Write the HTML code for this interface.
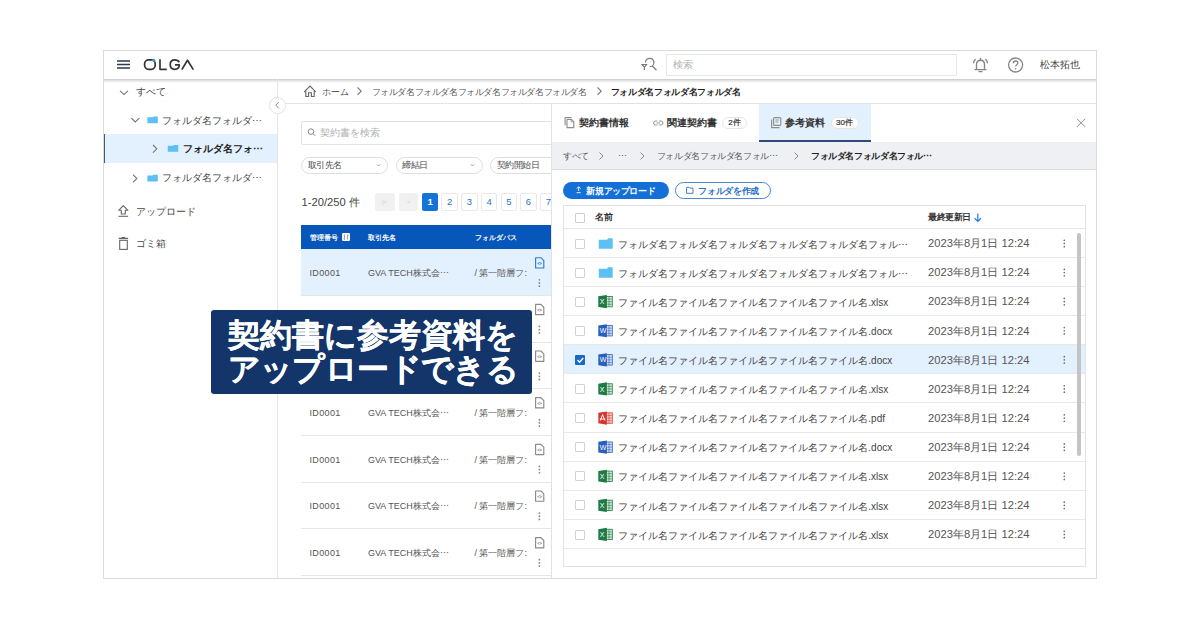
<!DOCTYPE html>
<html><head><meta charset="utf-8">
<style>
*{box-sizing:border-box;margin:0;padding:0}
html,body{width:1200px;height:630px;overflow:hidden;background:#fff}
body{position:relative;font-family:"Liberation Sans",sans-serif;color:#444}
.a{position:absolute}
.t{position:absolute;white-space:nowrap;line-height:1}
svg{position:absolute;overflow:visible}
</style></head><body>

<!-- frame -->
<div class="a" style="left:103px;top:50px;width:994px;height:529px;border:1px solid #dadada"></div>

<!-- header -->
<div class="a" style="left:104px;top:79px;width:992px;height:4px;background:linear-gradient(#c9c9c9,#e4e4e4 40%,rgba(255,255,255,0))"></div>
<svg style="left:0;top:0" width="200" height="100"><path d="M117 61H130M117 64.5H130M117 68H130" stroke="#2b3a4e" stroke-width="1.5"/></svg>
<svg style="left:0;top:0" width="1200" height="100">
  <g fill="none" stroke="#363636" stroke-width="1.7" stroke-linejoin="round">
    <rect x="144.6" y="59.9" width="10.6" height="9.4" rx="4"/>
    <path d="M160 59.3V69.3H166.8"/>
    <path d="M179.3 62.2C178.3 60.5 176.8 59.9 174.7 59.9C171.8 59.9 170.2 62 170.2 64.6C170.2 67.3 171.8 69.3 174.7 69.3C177.5 69.3 179.3 67.6 179.3 64.8H175"/>
    <path d="M181.8 69.6L187.5 60.2L193.3 69.6"/>
  </g>
  <circle cx="153.8" cy="60.3" r="1.5" fill="#2aa3e6"/>
  <!-- search filter icon -->
  <g fill="none" stroke="#7a7a7a" stroke-width="1.2">
    <path d="M645.5 62.5A4.2 4.2 0 1 1 649.8 66.7"/>
    <path d="M652.2 66L656.5 70.2"/>
    <path d="M642.2 64.5H646.5L644.35 67.3ZM644.35 67.3V70"/>
  </g>
  <!-- bell -->
  <g fill="none" stroke="#858585" stroke-width="1.35" stroke-linecap="round">
    <path d="M976.5 69.5V64.5C976.5 61.8 978.2 60.2 980.5 60.2C982.8 60.2 984.5 61.8 984.5 64.5V69.5M975 69.6H986M979 71.6H982"/>
    <path d="M975.2 59.4C974.2 60.3 973.7 61.5 973.6 62.8M985.8 59.4C986.8 60.3 987.3 61.5 987.4 62.8"/>
    <path d="M980.5 58.5V60"/>
  </g>
  <!-- help -->
  <g fill="none" stroke="#858585" stroke-width="1.3">
    <circle cx="1015.6" cy="65" r="7"/>
    <path d="M1013.3 63.2C1013.3 61.8 1014.3 61 1015.6 61C1016.9 61 1017.9 61.8 1017.9 63C1017.9 64.6 1015.6 64.8 1015.6 66.6"/>
  </g>
  <circle cx="1015.6" cy="68.8" r="0.8" fill="#858585"/>
</svg>
<div class="a" style="left:666px;top:53.5px;width:291px;height:22.5px;border:1px solid #e6e6e6;border-radius:1px"></div>
<div class="t" style="left:672.5px;top:60px;font-size:9.6px;color:#b0b0b0">検索</div>
<div class="t" style="left:1039.5px;top:59.5px;font-size:9.8px;color:#444">松本拓也</div>

<!-- sidebar -->
<div class="a" style="left:277px;top:79px;width:1px;height:499px;background:#e4e4e4"></div>
<div class="a" style="left:104px;top:134.3px;width:173px;height:28.7px;background:#e3f0fd"></div>
<div class="a" style="left:104px;top:134.3px;width:1.3px;height:28.7px;background:#4a5870"></div>
<svg style="left:0;top:0" width="300" height="300">
  <g fill="none" stroke="#777" stroke-width="1.1">
    <path d="M120 90.8L124 94.6L128 90.8"/>
    <path d="M131.3 118.2L135.3 122L139.3 118.2"/>
    <path d="M153 145L156.8 148.8L153 152.6"/>
    <path d="M133 174.7L136.8 178.5L133 182.3"/>
  </g>
  <g fill="#5cc0f4"><path d="M147.4 117.3H152.70000000000002L153.20000000000002 116.5H157.8V123.3H147.4z"/><path d="M167.8 145.8H173.10000000000002L173.60000000000002 145H178.20000000000002V151.8H167.8z"/><path d="M147.4 175.60000000000002H152.70000000000002L153.20000000000002 174.8H157.8V181.60000000000002H147.4z"/></g>
  <g fill="none" stroke="#666" stroke-width="1.1">
    <path d="M123.3 205.6L127.9 210.3H125.3V214H121.3V210.3H118.7Z" stroke-linejoin="round"/><path d="M118.5 216.3H128.1"/>
    <path d="M118.6 238.4H128.1M121.6 237.6H125.1"/><rect x="119.7" y="240.3" width="7.6" height="9.1"/>
  </g>
</svg>
<div class="t" style="left:136px;top:87px;font-size:10px;color:#474747">すべて</div>
<div class="t" style="left:162px;top:116px;font-size:10px;color:#474747">フォルダ名フォルダ⋯</div>
<div class="t" style="left:182.5px;top:144px;font-size:10px;color:#222;font-weight:bold">フォルダ名フォ⋯</div>
<div class="t" style="left:162px;top:173px;font-size:10px;color:#474747">フォルダ名フォルダ⋯</div>
<div class="t" style="left:135.5px;top:206.5px;font-size:10px;color:#474747">アップロード</div>
<div class="t" style="left:135.5px;top:238.5px;font-size:10px;color:#474747">ゴミ箱</div>

<!-- main breadcrumb -->
<div class="a" style="left:285px;top:103px;width:266px;height:1px;background:#e4e4e4"></div>
<div class="a" style="left:269px;top:96.8px;width:17px;height:17px;border-radius:50%;background:#fff;border:1px solid #e2e2e2"></div>
<svg style="left:0;top:0" width="800" height="300">
  <path d="M278.8 102L275.8 105.2L278.8 108.4" fill="none" stroke="#888" stroke-width="1"/>
  <path d="M304.2 91.8L310 86L315.8 91.8M305.8 90.3V96.5H308.6V92.8H311.4V96.5H314.2V90.3" fill="none" stroke="#666" stroke-width="1.1"/>
  <path d="M357.5 87.5L361.2 91.2L357.5 94.9" fill="none" stroke="#777" stroke-width="1.1"/>
  <path d="M597.5 87.5L601.2 91.2L597.5 94.9" fill="none" stroke="#777" stroke-width="1.1"/>
</svg>
<div class="t" style="left:322px;top:88px;font-size:8.6px;color:#555">ホーム</div>
<div class="t" style="left:371.5px;top:87.6px;font-size:9px;letter-spacing:-0.4px;color:#555">フォルダ名フォルダ名フォルダ名フォルダ名フォルダ名</div>
<div class="t" style="left:610.5px;top:87.6px;font-size:9px;letter-spacing:-0.33px;color:#222;font-weight:bold">フォルダ名フォルダ名フォルダ名</div>

<!-- main search -->
<div class="a" style="left:300.5px;top:120.5px;width:300px;height:24.5px;border:1px solid #e3e3e3;border-radius:2px"></div>
<svg style="left:0;top:0" width="400" height="200">
  <circle cx="311" cy="131.6" r="2.8" fill="none" stroke="#888" stroke-width="1"/>
  <path d="M313 133.6L315.2 135.8" stroke="#888" stroke-width="1"/>
</svg>
<div class="t" style="left:320px;top:127.6px;font-size:9.8px;color:#b0b0b0">契約書を検索</div>

<!-- filter chips -->
<div class="a" style="left:301px;top:156.5px;width:87px;height:17.5px;border:1px solid #dedede;border-radius:9px"></div>
<div class="a" style="left:395.8px;top:156.5px;width:87px;height:17.5px;border:1px solid #dedede;border-radius:9px"></div>
<div class="a" style="left:490.4px;top:156.5px;width:87px;height:17.5px;border:1px solid #dedede;border-radius:9px"></div>
<div class="t" style="left:307.5px;top:160.8px;font-size:9px;letter-spacing:-0.5px;color:#4a4a4a">取引先名</div>
<div class="t" style="left:402px;top:160.8px;font-size:9px;letter-spacing:-0.5px;color:#4a4a4a">締結日</div>
<div class="t" style="left:496.5px;top:160.8px;font-size:9px;letter-spacing:-0.5px;color:#4a4a4a">契約開始日</div>
<svg style="left:0;top:0" width="600" height="200">
  <path d="M376.8 164.3L378.5 166L380.2 164.3M470.8 164.3L472.5 166L474.2 164.3" fill="none" stroke="#999" stroke-width="0.9"/>
</svg>

<!-- pagination -->
<div class="t" style="left:301.5px;top:196.5px;font-size:11.2px;color:#444">1-20/250 件</div>
<div class="a" style="left:375px;top:193.2px;width:19.7px;height:17.5px;background:#f1f1f1;border-radius:2px"></div>
<div class="a" style="left:399.2px;top:193.2px;width:19.2px;height:17.5px;background:#f1f1f1;border-radius:2px"></div>
<div class="t" style="left:382px;top:198.5px;font-size:6px;color:#ccc">|&lt;</div>
<div class="t" style="left:407px;top:198.5px;font-size:6px;color:#ccc">&lt;</div>
<div class="a" style="left:422.2px;top:193.2px;width:16px;height:17.5px;background:#1473d6;border-radius:2px"></div>
<div class="t" style="left:427.6px;top:197.3px;font-size:9.5px;color:#fff;font-weight:bold">1</div>
<div class="a" style="left:441.3px;top:193.2px;width:16.5px;height:17.5px;border:1px solid #e9e9e9;border-radius:2px"></div>
<div class="a" style="left:461px;top:193.2px;width:16.5px;height:17.5px;border:1px solid #e9e9e9;border-radius:2px"></div>
<div class="a" style="left:480.8px;top:193.2px;width:16.5px;height:17.5px;border:1px solid #e9e9e9;border-radius:2px"></div>
<div class="a" style="left:500.6px;top:193.2px;width:16.5px;height:17.5px;border:1px solid #e9e9e9;border-radius:2px"></div>
<div class="a" style="left:520px;top:193.2px;width:16.5px;height:17.5px;border:1px solid #e9e9e9;border-radius:2px"></div>
<div class="a" style="left:540px;top:193.2px;width:16.5px;height:17.5px;border:1px solid #e9e9e9;border-radius:2px"></div>
<div class="t" style="left:447px;top:197.3px;font-size:9.5px;color:#2a73cc">2</div>
<div class="t" style="left:466.8px;top:197.3px;font-size:9.5px;color:#2a73cc">3</div>
<div class="t" style="left:486.5px;top:197.3px;font-size:9.5px;color:#2a73cc">4</div>
<div class="t" style="left:506.3px;top:197.3px;font-size:9.5px;color:#2a73cc">5</div>
<div class="t" style="left:525.8px;top:197.3px;font-size:9.5px;color:#2a73cc">6</div>
<div class="t" style="left:545.7px;top:197.3px;font-size:9.5px;color:#2a73cc">7</div>

<!-- left table -->
<div class="a" style="left:301px;top:224.8px;width:260px;height:24px;background:#0756b9"></div>
<div class="t" style="left:309.7px;top:233.7px;font-size:7.2px;color:#fff;font-weight:bold">管理番号</div>
<div class="a" style="left:341.8px;top:232.9px;width:8.4px;height:8.4px;background:#fff;border-radius:1.2px"></div><svg style="left:0;top:0" width="400" height="300"><path d="M344.5 234.6V239.6M343.4 238.4L344.5 239.6M347.5 234.6V239.6M348.6 235.8L347.5 234.6" fill="none" stroke="#8a8a8a" stroke-width="0.75"/></svg>
<div class="t" style="left:368.2px;top:233.7px;font-size:7.2px;color:#fff;font-weight:bold">取引先名</div>
<div class="t" style="left:474.8px;top:233.7px;font-size:7.2px;color:#fff;font-weight:bold">フォルダパス</div>
<div class="a" style="left:301px;top:248.8px;width:260px;height:46.4px;background:#e3f0fd"></div>

<div class="a" style="left:301px;top:294.95px;width:260px;height:1px;background:#e6e6e6"></div>
<div class="t" style="left:309.5px;top:269.23px;font-size:9px;letter-spacing:0.35px;color:#555">ID0001</div>
<div class="t" style="left:368px;top:269.23px;font-size:9px;color:#555">GVA TECH株式会⋯</div>
<div class="t" style="left:474.4px;top:269.23px;font-size:9px;color:#555">/ 第一階層フ:</div>
<svg style="left:0;top:0" width="600" height="630"><path d="M535.6 257.70h5.3l2.9 2.9v7.4h-8.2z" fill="none" stroke="#2f7bd0" stroke-width="1.15" stroke-linejoin="round"/><path d="M537.6 263.40q2.1 -2 4.2 0q-2.1 2 -4.2 0z" fill="none" stroke="#2f7bd0" stroke-width="0.7"/></svg>
<svg style="left:0;top:0" width="600" height="630"><g fill="#858585"><circle cx="539.4" cy="279.80" r="0.9"/><circle cx="539.4" cy="283.00" r="0.9"/><circle cx="539.4" cy="286.20" r="0.9"/></g></svg>
<div class="a" style="left:301px;top:341.60px;width:260px;height:1px;background:#e6e6e6"></div>
<div class="t" style="left:309.5px;top:315.88px;font-size:9px;letter-spacing:0.35px;color:#555">ID0001</div>
<div class="t" style="left:368px;top:315.88px;font-size:9px;color:#555">GVA TECH株式会⋯</div>
<div class="t" style="left:474.4px;top:315.88px;font-size:9px;color:#555">/ 第一階層フ:</div>
<svg style="left:0;top:0" width="600" height="630"><path d="M535.6 304.35h5.3l2.9 2.9v7.4h-8.2z" fill="none" stroke="#8a8a8a" stroke-width="1.15" stroke-linejoin="round"/><path d="M537.6 310.05q2.1 -2 4.2 0q-2.1 2 -4.2 0z" fill="none" stroke="#8a8a8a" stroke-width="0.7"/></svg>
<svg style="left:0;top:0" width="600" height="630"><g fill="#858585"><circle cx="539.4" cy="326.45" r="0.9"/><circle cx="539.4" cy="329.65" r="0.9"/><circle cx="539.4" cy="332.85" r="0.9"/></g></svg>
<div class="a" style="left:301px;top:388.25px;width:260px;height:1px;background:#e6e6e6"></div>
<div class="t" style="left:309.5px;top:362.53px;font-size:9px;letter-spacing:0.35px;color:#555">ID0001</div>
<div class="t" style="left:368px;top:362.53px;font-size:9px;color:#555">GVA TECH株式会⋯</div>
<div class="t" style="left:474.4px;top:362.53px;font-size:9px;color:#555">/ 第一階層フ:</div>
<svg style="left:0;top:0" width="600" height="630"><path d="M535.6 351.00h5.3l2.9 2.9v7.4h-8.2z" fill="none" stroke="#8a8a8a" stroke-width="1.15" stroke-linejoin="round"/><path d="M537.6 356.70q2.1 -2 4.2 0q-2.1 2 -4.2 0z" fill="none" stroke="#8a8a8a" stroke-width="0.7"/></svg>
<svg style="left:0;top:0" width="600" height="630"><g fill="#858585"><circle cx="539.4" cy="373.10" r="0.9"/><circle cx="539.4" cy="376.30" r="0.9"/><circle cx="539.4" cy="379.50" r="0.9"/></g></svg>
<div class="a" style="left:301px;top:434.90px;width:260px;height:1px;background:#e6e6e6"></div>
<div class="t" style="left:309.5px;top:409.18px;font-size:9px;letter-spacing:0.35px;color:#555">ID0001</div>
<div class="t" style="left:368px;top:409.18px;font-size:9px;color:#555">GVA TECH株式会⋯</div>
<div class="t" style="left:474.4px;top:409.18px;font-size:9px;color:#555">/ 第一階層フ:</div>
<svg style="left:0;top:0" width="600" height="630"><path d="M535.6 397.65h5.3l2.9 2.9v7.4h-8.2z" fill="none" stroke="#8a8a8a" stroke-width="1.15" stroke-linejoin="round"/><path d="M537.6 403.35q2.1 -2 4.2 0q-2.1 2 -4.2 0z" fill="none" stroke="#8a8a8a" stroke-width="0.7"/></svg>
<svg style="left:0;top:0" width="600" height="630"><g fill="#858585"><circle cx="539.4" cy="419.75" r="0.9"/><circle cx="539.4" cy="422.95" r="0.9"/><circle cx="539.4" cy="426.15" r="0.9"/></g></svg>
<div class="a" style="left:301px;top:481.55px;width:260px;height:1px;background:#e6e6e6"></div>
<div class="t" style="left:309.5px;top:455.82px;font-size:9px;letter-spacing:0.35px;color:#555">ID0001</div>
<div class="t" style="left:368px;top:455.82px;font-size:9px;color:#555">GVA TECH株式会⋯</div>
<div class="t" style="left:474.4px;top:455.82px;font-size:9px;color:#555">/ 第一階層フ:</div>
<svg style="left:0;top:0" width="600" height="630"><path d="M535.6 444.30h5.3l2.9 2.9v7.4h-8.2z" fill="none" stroke="#8a8a8a" stroke-width="1.15" stroke-linejoin="round"/><path d="M537.6 450.00q2.1 -2 4.2 0q-2.1 2 -4.2 0z" fill="none" stroke="#8a8a8a" stroke-width="0.7"/></svg>
<svg style="left:0;top:0" width="600" height="630"><g fill="#858585"><circle cx="539.4" cy="466.40" r="0.9"/><circle cx="539.4" cy="469.60" r="0.9"/><circle cx="539.4" cy="472.80" r="0.9"/></g></svg>
<div class="a" style="left:301px;top:528.20px;width:260px;height:1px;background:#e6e6e6"></div>
<div class="t" style="left:309.5px;top:502.48px;font-size:9px;letter-spacing:0.35px;color:#555">ID0001</div>
<div class="t" style="left:368px;top:502.48px;font-size:9px;color:#555">GVA TECH株式会⋯</div>
<div class="t" style="left:474.4px;top:502.48px;font-size:9px;color:#555">/ 第一階層フ:</div>
<svg style="left:0;top:0" width="600" height="630"><path d="M535.6 490.95h5.3l2.9 2.9v7.4h-8.2z" fill="none" stroke="#8a8a8a" stroke-width="1.15" stroke-linejoin="round"/><path d="M537.6 496.65q2.1 -2 4.2 0q-2.1 2 -4.2 0z" fill="none" stroke="#8a8a8a" stroke-width="0.7"/></svg>
<svg style="left:0;top:0" width="600" height="630"><g fill="#858585"><circle cx="539.4" cy="513.05" r="0.9"/><circle cx="539.4" cy="516.25" r="0.9"/><circle cx="539.4" cy="519.45" r="0.9"/></g></svg>
<div class="a" style="left:301px;top:574.85px;width:260px;height:1px;background:#e6e6e6"></div>
<div class="t" style="left:309.5px;top:549.13px;font-size:9px;letter-spacing:0.35px;color:#555">ID0001</div>
<div class="t" style="left:368px;top:549.13px;font-size:9px;color:#555">GVA TECH株式会⋯</div>
<div class="t" style="left:474.4px;top:549.13px;font-size:9px;color:#555">/ 第一階層フ:</div>
<svg style="left:0;top:0" width="600" height="630"><path d="M535.6 537.60h5.3l2.9 2.9v7.4h-8.2z" fill="none" stroke="#8a8a8a" stroke-width="1.15" stroke-linejoin="round"/><path d="M537.6 543.30q2.1 -2 4.2 0q-2.1 2 -4.2 0z" fill="none" stroke="#8a8a8a" stroke-width="0.7"/></svg>
<svg style="left:0;top:0" width="600" height="630"><g fill="#858585"><circle cx="539.4" cy="559.70" r="0.9"/><circle cx="539.4" cy="562.90" r="0.9"/><circle cx="539.4" cy="566.10" r="0.9"/></g></svg>
<!-- right panel -->
<div class="a" style="left:550px;top:103px;width:4px;height:475px;background:linear-gradient(90deg,rgba(0,0,0,0),rgba(0,0,0,0.03))"></div>
<div class="a" style="left:551px;top:103px;width:545px;height:475px;background:#fff;border-top:1px solid #e2e2e2;border-left:1px solid #e2e2e2"></div>
<div class="a" style="left:758.7px;top:104px;width:112.6px;height:37.5px;background:#e3f0fd"></div>
<div class="a" style="left:758.7px;top:139.6px;width:112.6px;height:2px;background:#2c4a7c"></div>
<div class="a" style="left:552px;top:141.6px;width:544px;height:28px;background:#eef0f4;border-bottom:1px solid #dcdde0"></div>
<svg style="left:0;top:0" width="1200" height="300">
  <g fill="none" stroke="#8f8f8f" stroke-width="1.15" stroke-linejoin="round">
    <path d="M565.1 125.3V117.5H571.6"/>
    <path d="M567 119.4H571.4L573.8 121.8V127.6H567Z"/>
    <path d="M571.2 119.6V122H573.6" stroke-width="0.8"/>
    <path d="M657.4 121h-1.8a2 2 0 0 0 0 4h1.8M659.2 121h1.8a2 2 0 0 1 0 4h-1.8M656.6 123h3.4" stroke-width="0.95"/>
    <path d="M771.6 119.6V127.6H779.6"/>
    <rect x="773.6" y="117.6" width="7.2" height="7.8" rx="1"/>
    <path d="M775.4 120H779M775.4 122H778.2" stroke-width="0.9"/>
  </g>
  <path d="M1077 118.8l8 8M1085 118.8l-8 8" stroke="#8a8a8a" stroke-width="1"/>
  <g fill="none" stroke="#888" stroke-width="1">
    <path d="M599.5 152.5L603 156L599.5 159.5M640.5 152.5L644 156L640.5 159.5M794.5 152.5L798 156L794.5 159.5"/>
  </g>
</svg>
<div class="t" style="left:578.7px;top:118px;font-size:10px;color:#333;font-weight:bold">契約書情報</div>
<div class="t" style="left:667px;top:118px;font-size:10px;color:#333;font-weight:bold">関連契約書</div>
<div class="a" style="left:722px;top:116.7px;width:24.7px;height:12px;border:1px solid #e6e6e6;border-radius:6px;background:#fff"></div>
<div class="t" style="left:728.3px;top:118.6px;font-size:8px;color:#333;-webkit-text-stroke:0.2px #333">2件</div>
<div class="t" style="left:785px;top:118px;font-size:10px;color:#333;font-weight:bold">参考資料</div>
<div class="a" style="left:830.7px;top:116.7px;width:28px;height:12px;border:1px solid #e6e6e6;border-radius:6px;background:#fff"></div>
<div class="t" style="left:836px;top:118.6px;font-size:8px;color:#333;-webkit-text-stroke:0.2px #333">30件</div>

<div class="t" style="left:563.3px;top:152.2px;font-size:9px;letter-spacing:-0.5px;color:#555">すべて</div>
<div class="t" style="left:617.5px;top:152.2px;font-size:8.5px;color:#555">⋯</div>
<div class="t" style="left:656.7px;top:152.2px;font-size:9px;letter-spacing:-0.36px;color:#555">フォルダ名フォルダ名フォル⋯</div>
<div class="t" style="left:811px;top:152.2px;font-size:9px;letter-spacing:-0.38px;color:#222;font-weight:bold">フォルダ名フォルダ名フォル⋯</div>

<div class="a" style="left:562.6px;top:182px;width:106.4px;height:17px;background:#1470d6;border-radius:9px"></div>
<div class="t" style="left:586.4px;top:186.6px;font-size:9px;letter-spacing:-0.4px;color:#fff;font-weight:bold">新規アップロード</div>
<svg style="left:0;top:0" width="1200" height="300">
  <path d="M576.8 188.6L578.7 186.7L580.6 188.6M578.7 187V191M576.6 192.7H580.8" fill="none" stroke="#fff" stroke-width="0.9"/>
  <path d="M686.6 187.3h2.4l0.8 0.8h3.2v5.2h-6.4z" fill="none" stroke="#2a6fc9" stroke-width="0.9"/>
</svg>
<div class="a" style="left:674.5px;top:182px;width:96.3px;height:17px;border:1px solid #4d88d2;border-radius:9px"></div>
<div class="t" style="left:698.4px;top:186.6px;font-size:9px;letter-spacing:-0.35px;color:#2a6fc9;font-weight:bold">フォルダを作成</div>

<!-- file table -->
<div class="a" style="left:563px;top:205px;width:522.5px;height:362px;border:1px solid #e2e2e2"></div>
<div class="a" style="left:564px;top:227.8px;width:521px;height:1px;background:#e6e6e6"></div>
<div class="a" style="left:575.3px;top:212.8px;width:10px;height:10px;border:1px solid #cfcfcf;border-radius:1px"></div>
<div class="t" style="left:594.7px;top:212.5px;font-size:9px;color:#333;font-weight:bold">名前</div>
<div class="t" style="left:928px;top:213.3px;font-size:9px;letter-spacing:-0.4px;color:#333;font-weight:bold">最終更新日</div>
<svg style="left:0;top:0" width="1200" height="300">
  <path d="M977.8 213.5V221.2M974.6 218.2L977.8 221.4L981 218.2" fill="none" stroke="#2a7be0" stroke-width="1.25"/>
</svg>

<div class="a" style="left:564px;top:256.90px;width:521px;height:1px;background:#e8e8e8"></div>
<div class="a" style="left:575.3px;top:238.55px;width:10px;height:10px;border:1px solid #d2d2d2;border-radius:1px"></div>
<svg style="left:0;top:0" width="700" height="630"><path d="M598.8 239.75H607.2L608 238.15H612.7V248.75H598.8z" fill="#5cc0f4"/></svg>
<div class="t" style="left:618.3px;top:239.65px;font-size:10px;color:#444">フォルダ名フォルダ名フォルダ名フォルダ名フォルダ名フォル⋯</div>
<div class="t" style="left:928px;top:238.25px;font-size:11.2px;color:#555">2023年8月1日 12:24</div>
<svg style="left:0;top:0" width="1200" height="630"><g fill="#707070"><circle cx="1064.3" cy="240.25" r="0.85"/><circle cx="1064.3" cy="243.45" r="0.85"/><circle cx="1064.3" cy="246.65" r="0.85"/></g></svg>
<div class="a" style="left:564px;top:286.00px;width:521px;height:1px;background:#e8e8e8"></div>
<div class="a" style="left:575.3px;top:267.65px;width:10px;height:10px;border:1px solid #d2d2d2;border-radius:1px"></div>
<svg style="left:0;top:0" width="700" height="630"><path d="M598.8 268.85H607.2L608 267.25H612.7V277.85H598.8z" fill="#5cc0f4"/></svg>
<div class="t" style="left:618.3px;top:268.75px;font-size:10px;color:#444">フォルダ名フォルダ名フォルダ名フォルダ名フォルダ名フォル⋯</div>
<div class="t" style="left:928px;top:267.35px;font-size:11.2px;color:#555">2023年8月1日 12:24</div>
<svg style="left:0;top:0" width="1200" height="630"><g fill="#707070"><circle cx="1064.3" cy="269.35" r="0.85"/><circle cx="1064.3" cy="272.55" r="0.85"/><circle cx="1064.3" cy="275.75" r="0.85"/></g></svg>
<div class="a" style="left:564px;top:315.10px;width:521px;height:1px;background:#e8e8e8"></div>
<div class="a" style="left:575.3px;top:296.75px;width:10px;height:10px;border:1px solid #d2d2d2;border-radius:1px"></div>
<svg style="left:0;top:0" width="700" height="630"><rect x="605.80" y="296.45" width="6.5" height="10.4" fill="#cfe8d6" stroke="#1f7a43" stroke-width="0.8"/><path d="M607.30 299.05h4.5M607.30 301.65h4.5M607.30 304.25h4.5M609.00 296.65v10" stroke="#1f7a43" stroke-width="0.6"/><path d="M598.30 296.35L606.90 295.05V308.25L598.30 306.95z" fill="#1f7a43"/></svg>
<div class="t" style="left:599.70px;top:298.25px;font-size:7px;color:#fff">X</div>
<div class="t" style="left:618.3px;top:297.85px;font-size:10px;color:#444">ファイル名ファイル名ファイル名ファイル名ファイル名.xlsx</div>
<div class="t" style="left:928px;top:296.45px;font-size:11.2px;color:#555">2023年8月1日 12:24</div>
<svg style="left:0;top:0" width="1200" height="630"><g fill="#707070"><circle cx="1064.3" cy="298.45" r="0.85"/><circle cx="1064.3" cy="301.65" r="0.85"/><circle cx="1064.3" cy="304.85" r="0.85"/></g></svg>
<div class="a" style="left:564px;top:344.20px;width:521px;height:1px;background:#e8e8e8"></div>
<div class="a" style="left:575.3px;top:325.85px;width:10px;height:10px;border:1px solid #d2d2d2;border-radius:1px"></div>
<svg style="left:0;top:0" width="700" height="630"><rect x="605.80" y="325.55" width="6.5" height="10.4" fill="#d3dff5" stroke="#2b5fbf" stroke-width="0.8"/><path d="M607.30 328.15h4.5M607.30 330.75h4.5M607.30 333.35h4.5M609.00 325.75v10" stroke="#2b5fbf" stroke-width="0.6"/><path d="M598.30 325.45L606.90 324.15V337.35L598.30 336.05z" fill="#2b5fbf"/></svg>
<div class="t" style="left:599.70px;top:327.35px;font-size:7px;color:#fff">W</div>
<div class="t" style="left:618.3px;top:326.95px;font-size:10px;color:#444">ファイル名ファイル名ファイル名ファイル名ファイル名.docx</div>
<div class="t" style="left:928px;top:325.55px;font-size:11.2px;color:#555">2023年8月1日 12:24</div>
<svg style="left:0;top:0" width="1200" height="630"><g fill="#707070"><circle cx="1064.3" cy="327.55" r="0.85"/><circle cx="1064.3" cy="330.75" r="0.85"/><circle cx="1064.3" cy="333.95" r="0.85"/></g></svg>
<div class="a" style="left:564px;top:344.70px;width:521px;height:29.10px;background:#e3f0fd"></div>
<div class="a" style="left:564px;top:373.30px;width:521px;height:1px;background:#e8e8e8"></div>
<div class="a" style="left:575.3px;top:354.95px;width:10px;height:10px;background:#1769d0;border-radius:1px"></div>
<svg style="left:0;top:0" width="600" height="630"><path d="M577.5 360.05L579.6 362.15L583.2 358.05" fill="none" stroke="#fff" stroke-width="1.4"/></svg>
<svg style="left:0;top:0" width="700" height="630"><rect x="605.80" y="354.65" width="6.5" height="10.4" fill="#d3dff5" stroke="#2b5fbf" stroke-width="0.8"/><path d="M607.30 357.25h4.5M607.30 359.85h4.5M607.30 362.45h4.5M609.00 354.85v10" stroke="#2b5fbf" stroke-width="0.6"/><path d="M598.30 354.55L606.90 353.25V366.45L598.30 365.15z" fill="#2b5fbf"/></svg>
<div class="t" style="left:599.70px;top:356.45px;font-size:7px;color:#fff">W</div>
<div class="t" style="left:618.3px;top:356.05px;font-size:10px;color:#444">ファイル名ファイル名ファイル名ファイル名ファイル名.docx</div>
<div class="t" style="left:928px;top:354.65px;font-size:11.2px;color:#555">2023年8月1日 12:24</div>
<svg style="left:0;top:0" width="1200" height="630"><g fill="#707070"><circle cx="1064.3" cy="356.65" r="0.85"/><circle cx="1064.3" cy="359.85" r="0.85"/><circle cx="1064.3" cy="363.05" r="0.85"/></g></svg>
<div class="a" style="left:564px;top:402.40px;width:521px;height:1px;background:#e8e8e8"></div>
<div class="a" style="left:575.3px;top:384.05px;width:10px;height:10px;border:1px solid #d2d2d2;border-radius:1px"></div>
<svg style="left:0;top:0" width="700" height="630"><rect x="605.80" y="383.75" width="6.5" height="10.4" fill="#cfe8d6" stroke="#1f7a43" stroke-width="0.8"/><path d="M607.30 386.35h4.5M607.30 388.95h4.5M607.30 391.55h4.5M609.00 383.95v10" stroke="#1f7a43" stroke-width="0.6"/><path d="M598.30 383.65L606.90 382.35V395.55L598.30 394.25z" fill="#1f7a43"/></svg>
<div class="t" style="left:599.70px;top:385.55px;font-size:7px;color:#fff">X</div>
<div class="t" style="left:618.3px;top:385.15px;font-size:10px;color:#444">ファイル名ファイル名ファイル名ファイル名ファイル名.xlsx</div>
<div class="t" style="left:928px;top:383.75px;font-size:11.2px;color:#555">2023年8月1日 12:24</div>
<svg style="left:0;top:0" width="1200" height="630"><g fill="#707070"><circle cx="1064.3" cy="385.75" r="0.85"/><circle cx="1064.3" cy="388.95" r="0.85"/><circle cx="1064.3" cy="392.15" r="0.85"/></g></svg>
<div class="a" style="left:564px;top:431.50px;width:521px;height:1px;background:#e8e8e8"></div>
<div class="a" style="left:575.3px;top:413.15px;width:10px;height:10px;border:1px solid #d2d2d2;border-radius:1px"></div>
<svg style="left:0;top:0" width="700" height="630"><rect x="605.80" y="412.85" width="6.5" height="10.4" fill="#f6d0cd" stroke="#d8342c" stroke-width="0.8"/><path d="M607.30 415.45h4.5M607.30 418.05h4.5M607.30 420.65h4.5M609.00 413.05v10" stroke="#d8342c" stroke-width="0.6"/><path d="M598.30 412.75L606.90 411.45V424.65L598.30 423.35z" fill="#d8342c"/></svg>
<svg style="left:0;top:0" width="700" height="630"><path d="M602.60 414.55L600.30 420.55M602.60 414.55L604.90 420.55M599.80 419.05H605.30" stroke="#fff" stroke-width="1" fill="none"/></svg>
<div class="t" style="left:618.3px;top:414.25px;font-size:10px;color:#444">ファイル名ファイル名ファイル名ファイル名ファイル名.pdf</div>
<div class="t" style="left:928px;top:412.85px;font-size:11.2px;color:#555">2023年8月1日 12:24</div>
<svg style="left:0;top:0" width="1200" height="630"><g fill="#707070"><circle cx="1064.3" cy="414.85" r="0.85"/><circle cx="1064.3" cy="418.05" r="0.85"/><circle cx="1064.3" cy="421.25" r="0.85"/></g></svg>
<div class="a" style="left:564px;top:460.60px;width:521px;height:1px;background:#e8e8e8"></div>
<div class="a" style="left:575.3px;top:442.25px;width:10px;height:10px;border:1px solid #d2d2d2;border-radius:1px"></div>
<svg style="left:0;top:0" width="700" height="630"><rect x="605.80" y="441.95" width="6.5" height="10.4" fill="#d3dff5" stroke="#2b5fbf" stroke-width="0.8"/><path d="M607.30 444.55h4.5M607.30 447.15h4.5M607.30 449.75h4.5M609.00 442.15v10" stroke="#2b5fbf" stroke-width="0.6"/><path d="M598.30 441.85L606.90 440.55V453.75L598.30 452.45z" fill="#2b5fbf"/></svg>
<div class="t" style="left:599.70px;top:443.75px;font-size:7px;color:#fff">W</div>
<div class="t" style="left:618.3px;top:443.35px;font-size:10px;color:#444">ファイル名ファイル名ファイル名ファイル名ファイル名.docx</div>
<div class="t" style="left:928px;top:441.95px;font-size:11.2px;color:#555">2023年8月1日 12:24</div>
<svg style="left:0;top:0" width="1200" height="630"><g fill="#707070"><circle cx="1064.3" cy="443.95" r="0.85"/><circle cx="1064.3" cy="447.15" r="0.85"/><circle cx="1064.3" cy="450.35" r="0.85"/></g></svg>
<div class="a" style="left:564px;top:489.70px;width:521px;height:1px;background:#e8e8e8"></div>
<div class="a" style="left:575.3px;top:471.35px;width:10px;height:10px;border:1px solid #d2d2d2;border-radius:1px"></div>
<svg style="left:0;top:0" width="700" height="630"><rect x="605.80" y="471.05" width="6.5" height="10.4" fill="#cfe8d6" stroke="#1f7a43" stroke-width="0.8"/><path d="M607.30 473.65h4.5M607.30 476.25h4.5M607.30 478.85h4.5M609.00 471.25v10" stroke="#1f7a43" stroke-width="0.6"/><path d="M598.30 470.95L606.90 469.65V482.85L598.30 481.55z" fill="#1f7a43"/></svg>
<div class="t" style="left:599.70px;top:472.85px;font-size:7px;color:#fff">X</div>
<div class="t" style="left:618.3px;top:472.45px;font-size:10px;color:#444">ファイル名ファイル名ファイル名ファイル名ファイル名.xlsx</div>
<div class="t" style="left:928px;top:471.05px;font-size:11.2px;color:#555">2023年8月1日 12:24</div>
<svg style="left:0;top:0" width="1200" height="630"><g fill="#707070"><circle cx="1064.3" cy="473.05" r="0.85"/><circle cx="1064.3" cy="476.25" r="0.85"/><circle cx="1064.3" cy="479.45" r="0.85"/></g></svg>
<div class="a" style="left:564px;top:518.80px;width:521px;height:1px;background:#e8e8e8"></div>
<div class="a" style="left:575.3px;top:500.45px;width:10px;height:10px;border:1px solid #d2d2d2;border-radius:1px"></div>
<svg style="left:0;top:0" width="700" height="630"><rect x="605.80" y="500.15" width="6.5" height="10.4" fill="#cfe8d6" stroke="#1f7a43" stroke-width="0.8"/><path d="M607.30 502.75h4.5M607.30 505.35h4.5M607.30 507.95h4.5M609.00 500.35v10" stroke="#1f7a43" stroke-width="0.6"/><path d="M598.30 500.05L606.90 498.75V511.95L598.30 510.65z" fill="#1f7a43"/></svg>
<div class="t" style="left:599.70px;top:501.95px;font-size:7px;color:#fff">X</div>
<div class="t" style="left:618.3px;top:501.55px;font-size:10px;color:#444">ファイル名ファイル名ファイル名ファイル名ファイル名.xlsx</div>
<div class="t" style="left:928px;top:500.15px;font-size:11.2px;color:#555">2023年8月1日 12:24</div>
<svg style="left:0;top:0" width="1200" height="630"><g fill="#707070"><circle cx="1064.3" cy="502.15" r="0.85"/><circle cx="1064.3" cy="505.35" r="0.85"/><circle cx="1064.3" cy="508.55" r="0.85"/></g></svg>
<div class="a" style="left:564px;top:547.90px;width:521px;height:1px;background:#e8e8e8"></div>
<div class="a" style="left:575.3px;top:529.55px;width:10px;height:10px;border:1px solid #d2d2d2;border-radius:1px"></div>
<svg style="left:0;top:0" width="700" height="630"><rect x="605.80" y="529.25" width="6.5" height="10.4" fill="#cfe8d6" stroke="#1f7a43" stroke-width="0.8"/><path d="M607.30 531.85h4.5M607.30 534.45h4.5M607.30 537.05h4.5M609.00 529.45v10" stroke="#1f7a43" stroke-width="0.6"/><path d="M598.30 529.15L606.90 527.85V541.05L598.30 539.75z" fill="#1f7a43"/></svg>
<div class="t" style="left:599.70px;top:531.05px;font-size:7px;color:#fff">X</div>
<div class="t" style="left:618.3px;top:530.65px;font-size:10px;color:#444">ファイル名ファイル名ファイル名ファイル名ファイル名.xlsx</div>
<div class="t" style="left:928px;top:529.25px;font-size:11.2px;color:#555">2023年8月1日 12:24</div>
<svg style="left:0;top:0" width="1200" height="630"><g fill="#707070"><circle cx="1064.3" cy="531.25" r="0.85"/><circle cx="1064.3" cy="534.45" r="0.85"/><circle cx="1064.3" cy="537.65" r="0.85"/></g></svg>
<div class="a" style="left:1077px;top:232.5px;width:4px;height:223px;background:#c4c4c4;border-radius:2px"></div>
<!-- banner -->
<div class="a" style="left:211px;top:310.3px;width:321px;height:83.5px;background:#133569;border-radius:3px"></div>
<div class="t" style="left:227.5px;top:316.5px;font-size:31.6px;line-height:36px;color:#fff;font-weight:bold;-webkit-text-stroke:0.25px #fff">契約書に参考資料を</div>
<div class="t" style="left:227.5px;top:351px;font-size:31.6px;line-height:36px;color:#fff;font-weight:bold;letter-spacing:-0.6px;-webkit-text-stroke:0.25px #fff">アップロードできる</div>

</body></html>
